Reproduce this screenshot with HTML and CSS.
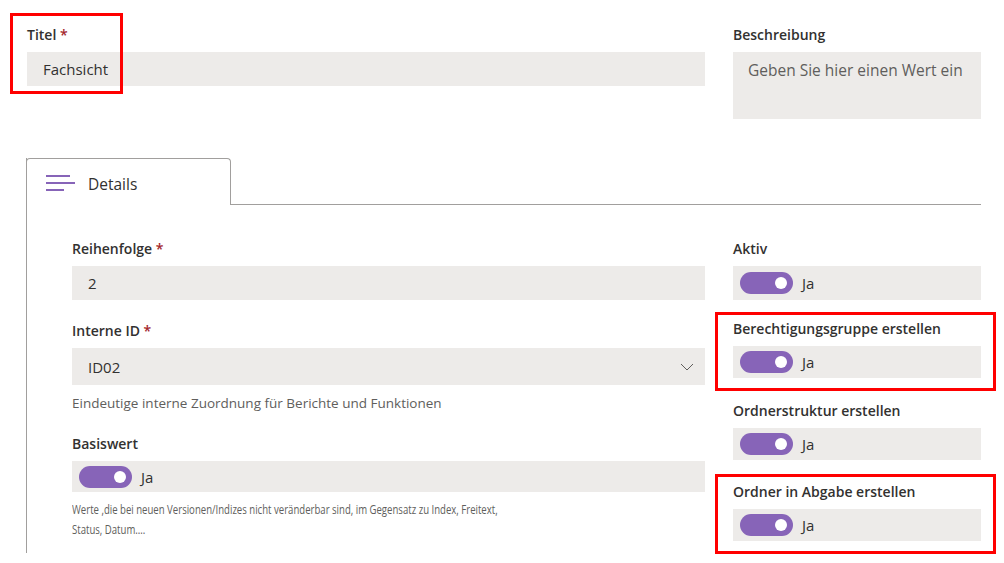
FILE: index.html
```html
<!DOCTYPE html>
<html lang="de">
<head>
<meta charset="utf-8">
<link rel="stylesheet" href="styles.css">
</head>
<body>
<div class="page">
  <div class="top-row">
    <div class="field">
      <div class="label">Titel <span class="req">*</span></div>
      <div class="input">Fachsicht</div>
    </div>
    <div class="field">
      <div class="label">Beschreibung</div>
      <div class="textarea placeholder">Geben Sie hier einen Wert ein</div>
    </div>
  </div>

  <div class="tabs">
    <div class="tab-head">
      <div class="tab">
        <svg class="tab-icon" width="30" height="18" viewBox="0 0 30 18">
          <rect x="0" y="1" width="24" height="2" fill="#8764b8"/>
          <rect x="0" y="8" width="29" height="2" fill="#8764b8"/>
          <rect x="0" y="15" width="18" height="2" fill="#8764b8"/>
        </svg>
        <span>Details</span>
      </div>
      <div class="tab-rest"></div>
    </div>
    <div class="panel">
      <div class="col-left">
        <div class="field">
          <div class="label">Reihenfolge <span class="req">*</span></div>
          <div class="input">2</div>
        </div>
        <div class="field">
          <div class="label">Interne ID <span class="req">*</span></div>
          <div class="input dropdown">ID02
            <svg class="chev" width="14" height="8" viewBox="0 0 14 8"><path d="M1 1 L7 7 L13 1" fill="none" stroke="#605e5c" stroke-width="1"/></svg>
          </div>
          <div class="help">Eindeutige interne Zuordnung für Berichte und Funktionen</div>
        </div>
        <div class="field">
          <div class="label">Basiswert</div>
          <div class="toggle-field short"><span class="toggle"><span class="knob"></span></span><span class="ja">Ja</span></div>
          <div class="help narrow"><div class="squeeze">Werte ,die bei neuen Versionen/Indizes nicht veränderbar sind, im Gegensatz zu Index, Freitext, Status, Datum....</div></div>
        </div>
      </div>
      <div class="col-right">
        <div class="field">
          <div class="label">Aktiv</div>
          <div class="toggle-field tall"><span class="toggle"><span class="knob"></span></span><span class="ja">Ja</span></div>
        </div>
        <div class="field">
          <div class="label">Berechtigungsgruppe erstellen</div>
          <div class="toggle-field"><span class="toggle"><span class="knob"></span></span><span class="ja">Ja</span></div>
        </div>
        <div class="field">
          <div class="label">Ordnerstruktur erstellen</div>
          <div class="toggle-field"><span class="toggle"><span class="knob"></span></span><span class="ja">Ja</span></div>
        </div>
        <div class="field">
          <div class="label">Ordner in Abgabe erstellen</div>
          <div class="toggle-field"><span class="toggle"><span class="knob"></span></span><span class="ja">Ja</span></div>
        </div>
      </div>
    </div>
  </div>

  <div class="mark mark-titel"></div>
  <div class="mark mark-berecht"></div>
  <div class="mark mark-abgabe"></div>
</div>
</body>
</html>
```

FILE: styles.css
```css
* { box-sizing: border-box; }
html, body { margin: 0; padding: 0; background: #fff; }
body {
  font-family: "Open Sans", "Noto Sans", sans-serif;
  color: #323130;
  font-size: 14px;
}
.page {
  position: relative;
  width: 1004px;
  height: 563px;
  overflow: hidden;
  padding: 25px 23px 0 27px;
}
.top-row {
  display: grid;
  grid-template-columns: 678px 248px;
  column-gap: 28px;
}
.field { display: flex; flex-direction: column; }
.label {
  font-weight: 600;
  font-size: 14px;
  line-height: 20px;
  height: 20px;
  margin-bottom: 7px;
  color: #323130;
}
.req { color: #a4262c; }
.input {
  height: 34px;
  background: #edebe9;
  display: flex;
  align-items: center;
  padding: 0 16px;
  font-size: 15px;
  color: #323130;
}
.textarea {
  height: 67px;
  background: #edebe9;
  padding: 7px 15px;
  font-size: 15.5px;
  line-height: 22px;
}
.placeholder { color: #605e5c; }

.tabs {
  margin-top: 39px;
  margin-left: -1px;
  width: 955px;
  border-left: 1px solid #a19f9d;
  height: 395px;
}
.tab-head {
  display: flex;
  height: 47px;
}
.tab {
  width: 205px;
  height: 47px;
  margin-left: -1px;
  border: 1px solid #a19f9d;
  border-bottom: none;
  border-radius: 4px 4px 0 0;
  display: flex;
  align-items: center;
  padding: 4px 0 0 19px;
  gap: 12px;
  font-size: 15.5px;
  color: #323130;
}
.tab-icon { display: block; margin-top: -3px; }
.tab-rest {
  flex: 1;
  border-bottom: 1px solid #a19f9d;
}
.panel {
  display: grid;
  grid-template-columns: 633px 248px;
  column-gap: 28px;
  padding: 34px 0 0 45px;
}
.col-left .field + .field { margin-top: 21px; }
.col-left .field:nth-child(3) { margin-top: 21px; }
.col-right .field:nth-child(2) { margin-top: 19px; }
.col-right .field:nth-child(3) { margin-top: 23px; }
.col-right .field:nth-child(4) { margin-top: 22px; }
.dropdown {
  height: 37px;
  justify-content: space-between;
  padding-right: 11px;
}
.chev { display: block; }
.help {
  font-size: 13.5px;
  line-height: 20px;
  color: #605e5c;
  margin-top: 8px;
}
.help.narrow {
  margin-top: 7px;
  height: 40px;
}
.squeeze {
  width: 615px;
  transform: scaleX(0.71);
  transform-origin: left top;
  font-size: 13.5px;
}
.toggle-field {
  height: 32px;
  background: #edebe9;
  display: flex;
  align-items: center;
  padding-left: 7px;
  gap: 9px;
}
.toggle-field.tall { height: 34px; }
.toggle-field.short { height: 31px; }
.toggle {
  width: 53px;
  height: 22px;
  border-radius: 11px;
  background: #8764b8;
  display: flex;
  align-items: center;
  justify-content: flex-end;
  padding-right: 6px;
}
.knob {
  width: 12px;
  height: 12px;
  border-radius: 50%;
  background: #fff;
}
.ja { font-size: 15px; color: #323130; }

.mark {
  position: absolute;
  border: 3px solid #f00;
}
.mark-titel { left: 10px; top: 13px; width: 113px; height: 81px; }
.mark-berecht { left: 715px; top: 312px; width: 281px; height: 79px; }
.mark-abgabe { left: 715px; top: 474px; width: 281px; height: 80px; }
```
